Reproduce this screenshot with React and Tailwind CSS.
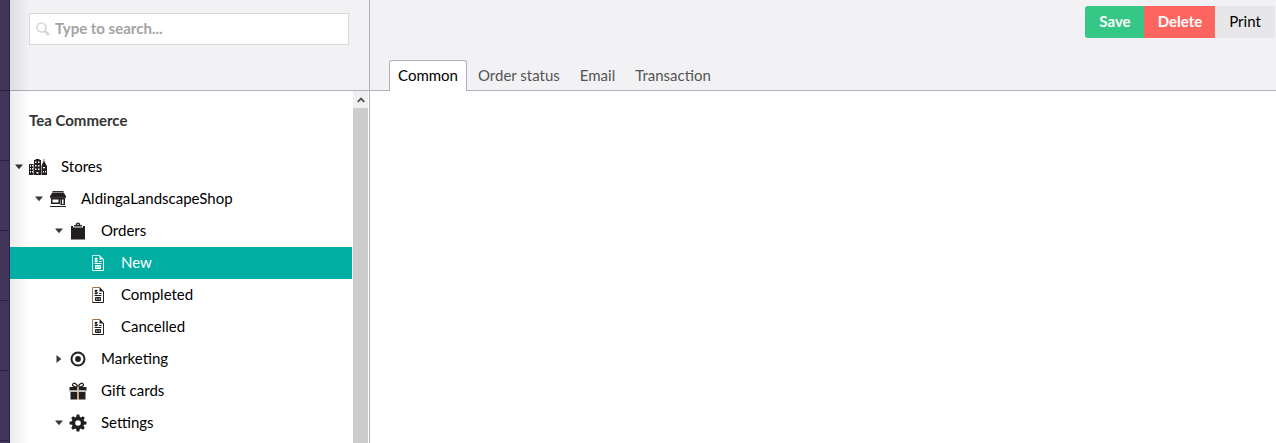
import clsx from 'clsx'

function StoresIcon() {
  return (
    <svg width="18" height="16" viewBox="0 0 18 16" fill="#231f20">
      <path fillRule="evenodd" d="M0 5h4.500v11H0zM1 6v1.500h1V6zm2 0v1.500h1V6zM1 9v1.500h1V9zm2 0v1.500h1V9zm-2 3v1.500h1V12zm2 0v1.500h1V12z" />
      <path fillRule="evenodd" d="M5 1h1.500V0h4v1H12v15H5zM6 2.500V4h1.500V2.500zm3 0V4h1.500V2.500zM6 6v1.500h1.500V6zm3 0v1.500h1.500V6zM6 9.500V11h1.500V9.500zm3 0V11h1.500V9.500zM7.500 13v1.500h2V13z" />
      <path fillRule="evenodd" d="M14.700 0h.600v2L17 5.500 18 7v9h-5.500V7l.5-1.500L14.700 2zM14 8v1.200h2V8zm0 4v1.500h1V12zm2 0v1.500h1V12z" />
    </svg>
  )
}

function ShopIcon() {
  return (
    <svg width="16" height="16" viewBox="0 0 16 16" fill="#231f20">
      <path d="M2.500 0h11v1h-11zM2.300 1.500h11.400L16 5.300V6.500q-1 1.300-2 0-1 1.300-2 0-1 1.300-2 0-1 1.300-2 0-1 1.300-2 0-1 1.300-2 0-1 1.300-2 0-1 1.300-2 0V5.300z" />
      <path d="M2.300 1.200h11.400" stroke="#8a8788" strokeWidth=".5" />
      <path fillRule="evenodd" d="M1 7h14v7h-4.500V8.500H10V13H1zm1.500 1.500v3h6v-3zM12 8.500V13h1.500V8.500z" />
      <path d="M0 15h16v1H0z" />
    </svg>
  )
}

function OrdersIcon() {
  return (
    <svg width="16" height="18" viewBox="0 0 16 18" fill="#231f20">
      <path d="M1 4h2v1.500h10V4h2v13.500H1z" />
      <path fillRule="evenodd" d="M3.800 4.600V3.500l2-.700a2.200 2.200 0 0 1 4.400 0l2 .700v1.100zM7 2.700h2a1 1 0 0 0-2 0z" />
    </svg>
  )
}

function InvoiceIcon({ active }) {
  return (
    <svg width="12" height="16" viewBox="0 0 12 16" fill="none" stroke={active ? '#fff' : '#231f20'}>
      <path d="M8 .500H.500v15" stroke={active ? '#c9fffa' : '#a8744a'} />
      <path d="M.500 15.500h11V4" />
      <path d="M7.500 0v4.500H12z" fill={active ? '#fff' : '#231f20'} stroke="none" />
      <path d="M5.500 3.500H3.200v1.500h2v1.500H2.500M4 2.500v5M7 6.500h2.500M2.500 8.500h7M3.500 10.500h5v3h-5zM6 10.500v3M3.500 12h5" />
    </svg>
  )
}

function MarketingIcon() {
  return (
    <svg width="16" height="16" viewBox="0 0 16 16">
      <circle cx="8" cy="8" r="6.500" fill="none" stroke="#231f20" strokeWidth="2" />
      <circle cx="8" cy="8" r="2.900" fill="#231f20" />
    </svg>
  )
}

function GiftIcon() {
  return (
    <svg width="18" height="18" viewBox="0 0 18 18" fill="#231f20">
      <path d="M8.500 5C6 5 3.200 4.300 3.500 2.600 4 .500 7.500.700 8.700 4.500M9.500 5c2.500 0 5.300-.700 5-2.400C14 .500 10.500.700 9.300 4.500" fill="none" stroke="#231f20" strokeWidth="1.300" />
      <path d="M.500 5h7.800v3.500H.500zM9.700 5h7.800v3.500H9.700zM1.500 10h6.800v7.500H1.500zM9.700 10h6.800v7.500H9.700z" />
      <path d="M8.300 5h1.400v12.500H8.300z" fill="#d9a378" />
      <path d="M.500 8.500h17V10H.500z" fill="#c8c7c9" />
    </svg>
  )
}

function SettingsIcon() {
  return (
    <svg width="18" height="18" viewBox="0 0 18 18" fill="#231f20">
      <circle cx="9" cy="9" r="4.500" fill="none" stroke="#231f20" strokeWidth="3.400" />
      <path d="M7.700.500h2.600l.7 3H7zM7.700 17.500h2.600l.7-3H7zM.500 7.700v2.600l3 .7V7zM17.500 7.700v2.600l-3 .7V7z" />
      <path d="M2.200 4l1.800-1.800 2.600 1.500-2.900 2.900zM15.800 4L14 2.200l-2.600 1.500 2.900 2.900zM2.200 14l1.800 1.800 2.600-1.500-2.900-2.900zM15.800 14L14 15.800l-2.600-1.500 2.900-2.900z" />
    </svg>
  )
}

const tree = [
  { label: 'Stores', icon: StoresIcon, indent: 'pl-1', arrow: 'down' },
  { label: 'AldingaLandscapeShop', icon: ShopIcon, indent: 'pl-6', arrow: 'down' },
  { label: 'Orders', icon: OrdersIcon, indent: 'pl-11', arrow: 'down' },
  { label: 'New', icon: InvoiceIcon, indent: 'pl-16', active: true },
  { label: 'Completed', icon: InvoiceIcon, indent: 'pl-16' },
  { label: 'Cancelled', icon: InvoiceIcon, indent: 'pl-16' },
  { label: 'Marketing', icon: MarketingIcon, indent: 'pl-11', arrow: 'right' },
  { label: 'Gift cards', icon: GiftIcon, indent: 'pl-11' },
  { label: 'Settings', icon: SettingsIcon, indent: 'pl-11', arrow: 'down' },
]

const tabs = ['Order status', 'Email', 'Transaction']

function Arrow({ direction }) {
  return (
    <svg width="10" height="10" viewBox="0 0 10 10" fill="#3b3537">
      {direction === 'down' && <path d="M1 2.500h8L5 7.300z" />}
      {direction === 'right' && <path d="M2.500 1v8L7.300 5z" />}
    </svg>
  )
}

function TreeItem({ item }) {
  const Icon = item.icon
  return (
    <li
      className={clsx(
        'flex h-8 items-center',
        item.indent,
        item.active ? 'relative z-10 bg-[#02aea2] text-white' : 'text-black'
      )}
    >
      <span className="flex w-[14px] shrink-0">
        <Arrow direction={item.arrow} />
      </span>
      <span className="flex w-5 shrink-0 justify-center">
        <Icon active={item.active} />
      </span>
      <span className="ml-[13px] pb-0.5">{item.label}</span>
    </li>
  )
}

function AppRail() {
  return (
    <div className="flex w-[10px] shrink-0 flex-col border-r border-[#2f2246] bg-[#413659]">
      <div className="h-[91px] shrink-0 border-b border-[#2b1f42]" />
      {[1, 2, 3, 4, 5].map((n) => (
        <div key={n} className="h-[70px] shrink-0 border-b border-[#2b1f42]" />
      ))}
    </div>
  )
}

function Sidebar() {
  return (
    <div className="relative flex w-[360px] shrink-0 flex-col border-r border-[#b1b0bd]">
      <div className="h-[91px] shrink-0 border-b border-[#b1b0bd] bg-[#f2f2f4] pt-[13px] pl-[19px]">
        <div className="flex h-8 w-80 items-center border border-[#d9d9dc] bg-white pl-[6px]">
          <svg width="14" height="14" viewBox="0 0 14 14" fill="none" stroke="#d5d4d8">
            <circle cx="5.500" cy="5.500" r="4.500" strokeWidth="1.600" />
            <path d="M9 9l3.800 3.800" strokeWidth="2.800" />
          </svg>
          <span className="ml-[5px] pb-0.5 font-bold text-[#a3a3a3]">Type to search...</span>
        </div>
      </div>
      <div className="flex min-h-0 flex-1">
        <div className="min-w-0 flex-1 overflow-hidden">
          <h5 className="flex h-[60px] items-center pb-0.5 pl-[19px] font-bold text-[#343434]">Tea Commerce</h5>
          <ul>
            {tree.map((item) => (
              <TreeItem key={item.label} item={item} />
            ))}
          </ul>
        </div>
        <div className="ml-px mr-px flex w-[15px] shrink-0 flex-col bg-[#f0f0f0]">
          <div className="flex h-[17px] shrink-0 items-center justify-center">
            <svg width="8" height="7" viewBox="0 0 8 7" fill="none" stroke="#505050" strokeWidth="1.800">
              <path d="M.7 5.800L4 2.500l3.300 3.300" />
            </svg>
          </div>
          <div className="flex-1 bg-[#cdcdcd]" />
        </div>
      </div>
      {/* shadow cast by the app rail */}
      <div className="absolute inset-y-0 left-0 w-5 bg-gradient-to-r from-black/8 to-transparent" />
    </div>
  )
}

function Editor() {
  return (
    <div className="flex min-w-0 flex-1 flex-col">
      <div className="flex h-[91px] shrink-0 flex-col justify-between border-b border-[#b1b0bd] bg-[#f2f2f4]">
        <div className="flex justify-end pt-[6px] pr-px">
          <button className="h-8 w-[59px] rounded-l-[3px] bg-[#35c786] pb-0.5 pl-px font-bold text-white">Save</button>
          <button className="h-8 w-[71px] bg-[#fe6561] pb-0.5 pl-px font-bold text-white">Delete</button>
          <button className="h-8 w-[60px] rounded-r-[3px] bg-[#e7e7e9] pb-0.5 text-black">Print</button>
        </div>
        <div className="-mb-px flex h-[31px] pl-[19px]">
          <div className="flex w-[78px] items-center justify-center rounded-t-[3px] border border-b-0 border-[#b1b0bd] bg-white pb-0.5 text-black">
            Common
          </div>
          <div className="flex items-center gap-5 pb-px pl-[11px] text-[#555]">
            {tabs.map((tab) => (
              <span key={tab}>{tab}</span>
            ))}
          </div>
        </div>
      </div>
      <div className="flex-1 bg-white" />
    </div>
  )
}

export default function App() {
  return (
    <div className="flex h-screen overflow-hidden bg-white font-['Lato',sans-serif] text-[15px] leading-5">
      <AppRail />
      <Sidebar />
      <Editor />
    </div>
  )
}
